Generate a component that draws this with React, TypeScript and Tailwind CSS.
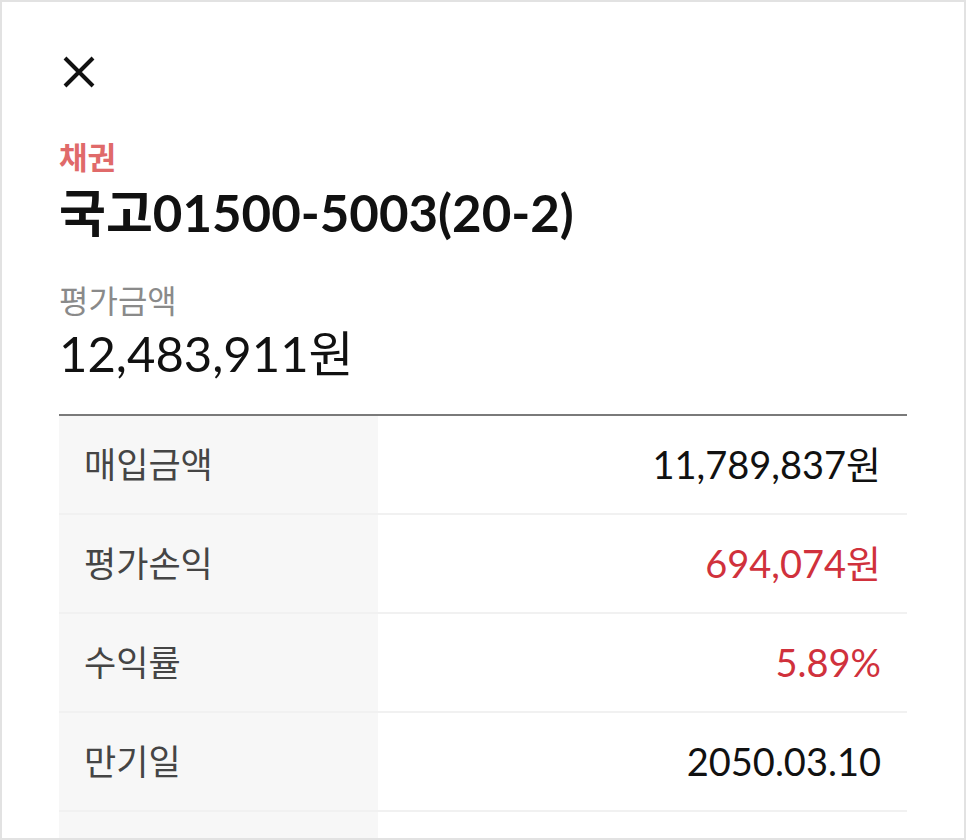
const rows = [
  { label: "매입금액", value: "11,789,837원", red: false },
  { label: "평가손익", value: "694,074원", red: true },
  { label: "수익률", value: "5.89%", red: true },
  { label: "만기일", value: "2050.03.10", red: false },
  { label: "", value: "", red: false },
];

const font = {
  fontFamily: '"Lato", "Noto Sans CJK KR", sans-serif',
};

export default function App() {
  return (
    <div
      className="h-[840px] w-[966px] overflow-hidden border-2 border-[#e2e2e2] bg-white"
      style={font}
    >
      <div className="px-[57px] pt-[50px]">
        <button className="flex h-[40px] w-[40px] items-center justify-center">
          <svg viewBox="0 0 32 32" className="size-[32px]" fill="none">
            <path
              d="M2 2 L30 30 M30 2 L2 30"
              stroke="#111"
              strokeWidth="4"
            />
          </svg>
        </button>

        <p className="mt-[45px] text-[31px] leading-[40px] font-bold text-[#e06a6a]">
          채권
        </p>
        <h1 className="mt-[6px] text-[51px] leading-[60px] font-bold text-[#111]">
          국고01500-5003(20-2)
        </h1>

        <p className="mt-[36px] text-[32px] leading-[44px] text-[#8a8a8a]">
          평가금액
        </p>
        <p className="text-[49px] leading-[60px] text-[#111]">12,483,911원</p>

        <div className="mt-[31px] border-t-2 border-[#7a7a7a]">
          {rows.map((row, i) => (
            <div key={i} className="flex h-[99px] border-b-2 border-[#f1f1f1]">
              <div className="flex w-[319px] items-center bg-[#f7f7f7] pl-[25px] text-[35px] text-[#454545]">
                {row.label}
              </div>
              <div
                className={`flex flex-1 items-center justify-end pr-[26px] text-[38px] ${
                  row.red ? "text-[#d0313c]" : "text-[#111]"
                }`}
              >
                {row.value}
              </div>
            </div>
          ))}
        </div>
      </div>
    </div>
  );
}
